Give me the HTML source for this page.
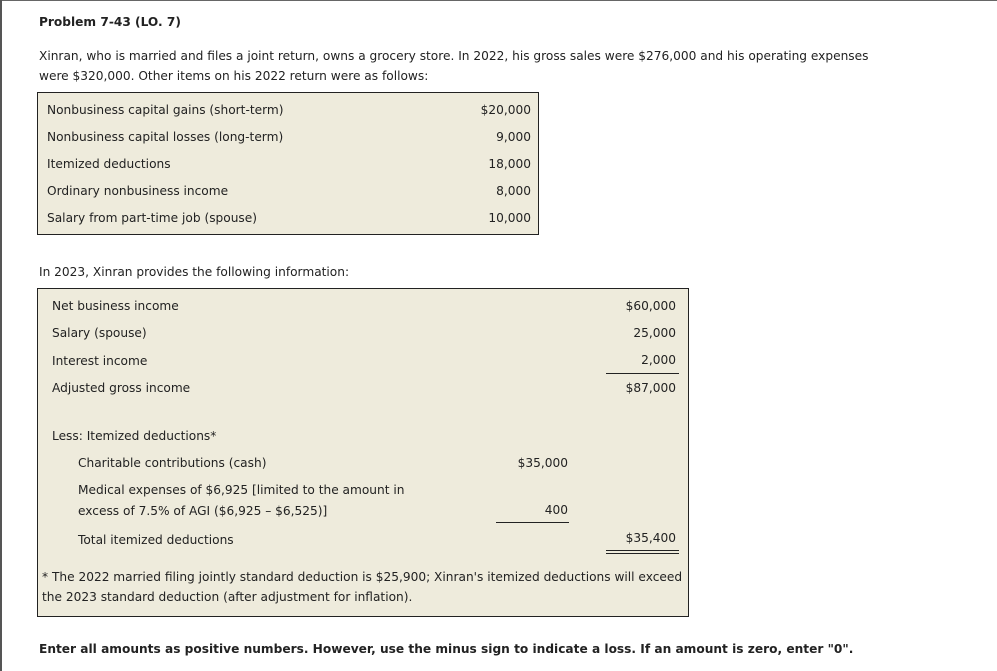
<!DOCTYPE html>
<html><head><meta charset="utf-8"><style>
*{margin:0;padding:0}
body{width:997px;height:671px;background:#fff;position:relative;overflow:hidden;font-family:"DejaVu Sans","Liberation Sans",sans-serif;font-size:12.18px;color:#222}
.a{position:absolute;white-space:nowrap;line-height:16px;margin-top:1px}
.r{text-align:right}
.box{position:absolute;background:#eeebdc;border:1px solid #222}
.ln{position:absolute;height:1px;background:#222}
</style></head><body>
<div style="position:absolute;left:0;top:0;width:997px;height:1px;background:#666"></div>
<div style="position:absolute;left:0;top:0;width:2px;height:671px;background:#555"></div>
<div class="a" style="left:39px;top:13px;font-weight:bold;">Problem 7-43 (LO. 7)</div>
<div class="a" style="left:39px;top:47px;">Xinran, who is married and files a joint return, owns a grocery store. In 2022, his gross sales were $276,000 and his operating expenses</div>
<div class="a" style="left:39px;top:67px;">were $320,000. Other items on his 2022 return were as follows:</div>
<div class="box" style="left:37px;top:92px;width:500px;height:141px"></div>
<div class="a" style="left:47px;top:101px">Nonbusiness capital gains (short-term)</div><div class="a r" style="right:466px;top:101px">$20,000</div>
<div class="a" style="left:47px;top:128px">Nonbusiness capital losses (long-term)</div><div class="a r" style="right:466px;top:128px">9,000</div>
<div class="a" style="left:47px;top:155px">Itemized deductions</div><div class="a r" style="right:466px;top:155px">18,000</div>
<div class="a" style="left:47px;top:182px">Ordinary nonbusiness income</div><div class="a r" style="right:466px;top:182px">8,000</div>
<div class="a" style="left:47px;top:209px">Salary from part-time job (spouse)</div><div class="a r" style="right:466px;top:209px">10,000</div>
<div class="a" style="left:39px;top:263px">In 2023, Xinran provides the following information:</div>
<div class="box" style="left:37px;top:288px;width:650px;height:327px"></div>
<div class="a" style="left:52px;top:297px">Net business income</div><div class="a r" style="right:321px;top:297px">$60,000</div>
<div class="a" style="left:52px;top:324px">Salary (spouse)</div><div class="a r" style="right:321px;top:324px">25,000</div>
<div class="a" style="left:52px;top:352px">Interest income</div><div class="a r" style="right:321px;top:351px">2,000</div>
<div class="ln" style="left:606px;top:373px;width:73px"></div>
<div class="a" style="left:52px;top:379px">Adjusted gross income</div><div class="a r" style="right:321px;top:379px">$87,000</div>
<div class="a" style="left:52px;top:427px">Less: Itemized deductions*</div>
<div class="a" style="left:78px;top:454px">Charitable contributions (cash)</div><div class="a r" style="right:429px;top:454px">$35,000</div>
<div class="a" style="left:78px;top:481px">Medical expenses of $6,925 [limited to the amount in</div>
<div class="a" style="left:78px;top:502px">excess of 7.5% of AGI ($6,925 – $6,525)]</div><div class="a r" style="right:429px;top:501px">400</div>
<div class="ln" style="left:496px;top:522px;width:73px"></div>
<div class="a" style="left:78px;top:531px">Total itemized deductions</div><div class="a r" style="right:321px;top:529px">$35,400</div>
<div class="ln" style="left:606px;top:550px;width:73px"></div><div class="ln" style="left:606px;top:553px;width:73px"></div>
<div class="a" style="left:42px;top:568px">* The 2022 married filing jointly standard deduction is $25,900; Xinran's itemized deductions will exceed</div>
<div class="a" style="left:42px;top:588px">the 2023 standard deduction (after adjustment for inflation).</div>
<div class="a" style="left:39px;top:640px;font-weight:bold">Enter all amounts as positive numbers. However, use the minus sign to indicate a loss. If an amount is zero, enter "0".</div>
</body></html>
